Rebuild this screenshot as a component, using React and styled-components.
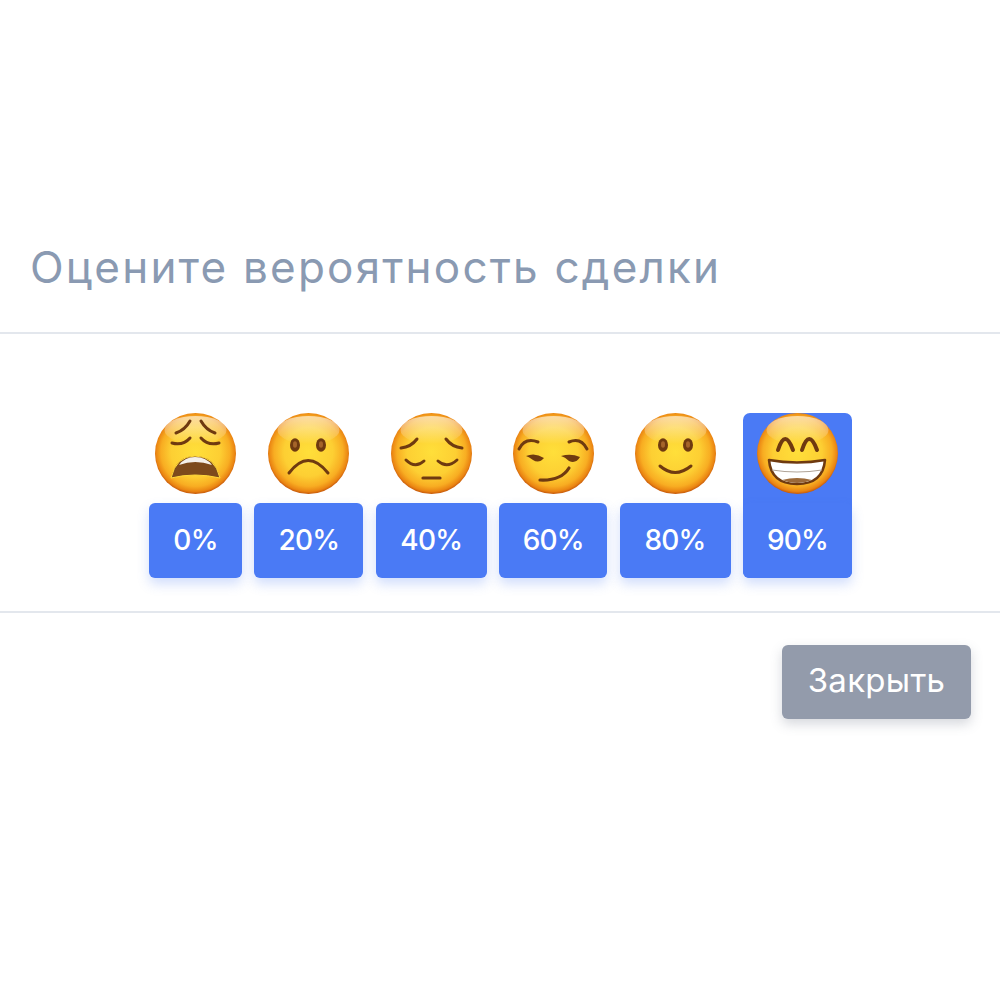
import React from "react";
import styled, { createGlobalStyle } from "styled-components";

const GlobalStyle = createGlobalStyle`
	body {
		margin: 0;
		background: #ffffff;
		font-family: "Inter", "Open Sans", sans-serif;
	}
`;

const INK = "#6f3a10";

function Line({ d, w = 3 }) {
	return <path d={d} fill="none" stroke={INK} strokeWidth={w} strokeLinecap="round" />;
}

function Eye({ cx, cy }) {
	return (
		<>
			<ellipse cx={cx} cy={cy} rx="5" ry="6.8" fill={INK} />
			<ellipse cx={cx} cy={cy - 0.5} rx="2" ry="3.2" fill="#a5642a" />
		</>
	);
}

function Weary() {
	return (
		<>
			<Line d="M21 20 Q30 17 35 8" />
			<Line d="M46 8 Q51 17 60 20" />
			<Line d="M17 30 Q28 33 35 25" />
			<Line d="M46 25 Q53 33 64 30" />
			<path d="M16 65 Q21 43 40 43 Q60 43 65 65 Q40 59 16 65Z" fill="#7d4a1c" stroke="#ffd93b" strokeWidth="1" />
			<path d="M24 52 Q30 44 40 44 Q51 44 57 52 Q40 46 24 52Z" fill="#f4f0ea" />
		</>
	);
}

function Frown() {
	return (
		<>
			<Eye cx={27} cy={32} />
			<Eye cx={53} cy={32} />
			<Line d="M21 60 Q40 35 60 60" />
		</>
	);
}

function Pensive() {
	return (
		<>
			<Line d="M10 35 Q20 34 26 26" />
			<Line d="M55 26 Q61 34 71 35" />
			<Line d="M15 47 Q24 56 33 48" />
			<Line d="M47 48 Q56 56 66 47" />
			<Line d="M32 65 H49" w={3.2} />
		</>
	);
}

function Smirk() {
	return (
		<>
			<Line d="M6 36 Q12 24 25 29" />
			<Line d="M56 29 Q68 24 74 36" />
			<path d="M13 43 Q22 39 31 45 Q26 51 20 47 Q16 44 13 43Z" fill={INK} />
			<path d="M48 43 Q58 40 67 44 Q63 51 56 48 Q52 44 48 43Z" fill={INK} />
			<Line d="M27 67 Q48 68 56 55" w={3.2} />
		</>
	);
}

function Smile() {
	return (
		<>
			<Eye cx={28} cy={32} />
			<Eye cx={53} cy={32} />
			<Line d="M25 53 Q40 66 56 53" />
		</>
	);
}

function Grin() {
	return (
		<>
			<Line d="M21 37 Q28 15 36 37" w={4} />
			<Line d="M45 37 Q52 15 60 37" w={4} />
			<path d="M12 47 Q40 52 68 47 Q66 71 40 71 Q14 71 12 47Z" fill="#ffffff" stroke={INK} strokeWidth="2.6" strokeLinejoin="round" />
			<path d="M15 57 Q40 61 65 57" fill="none" stroke="#b0a498" strokeWidth="1.2" />
			<path d="M25 67 Q40 63 55 67 Q48 70 40 70 Q32 70 25 67Z" fill="#9c6a3a" />
		</>
	);
}

function Face({ id, children }) {
	return (
		<FaceSvg viewBox="0 0 81 81">
			<defs>
				<radialGradient id={id} cx="50%" cy="48%" r="52%">
					<stop offset="0%" stopColor="#ffdf3a" />
					<stop offset="58%" stopColor="#fdcf33" />
					<stop offset="82%" stopColor="#f8ad22" />
					<stop offset="94%" stopColor="#ea8412" />
					<stop offset="100%" stopColor="#c4570a" />
				</radialGradient>
				<linearGradient id={id + "-shine"} x1="0" y1="0" x2="0" y2="1">
					<stop offset="0%" stopColor="#ffffff" stopOpacity="0.6" />
					<stop offset="100%" stopColor="#ffffff" stopOpacity="0" />
				</linearGradient>
			</defs>
			<circle cx="40.5" cy="40.5" r="40.5" fill={`url(#${id})`} />
			<ellipse cx="40.5" cy="17" rx="31" ry="14" fill={`url(#${id}-shine)`} />
			{children}
		</FaceSvg>
	);
}

const options = [
	{ label: "0%", width: 93, Mouth: Weary },
	{ label: "20%", width: 109, Mouth: Frown },
	{ label: "40%", width: 111, Mouth: Pensive },
	{ label: "60%", width: 108, Mouth: Smirk },
	{ label: "80%", width: 111, Mouth: Smile },
	{ label: "90%", width: 109, Mouth: Grin, active: true },
];

export default function App() {
	return (
		<>
			<GlobalStyle />
			<Modal>
				<Header>
					<Title>Оцените вероятность сделки</Title>
				</Header>
				<Body>
					{options.map(({ label, width, Mouth, active }) => (
						<Option key={label} $width={width} $active={active}>
							<Face id={"face-" + parseInt(label)}>
								<Mouth />
							</Face>
							<Label>{label}</Label>
						</Option>
					))}
				</Body>
				<Footer>
					<CloseButton>Закрыть</CloseButton>
				</Footer>
			</Modal>
		</>
	);
}

const Modal = styled.div`
	width: 1000px;
	height: 1000px;
	background: #ffffff;
`;

const Header = styled.div`
	display: flex;
	align-items: flex-end;
	height: 334px;
	padding: 0 30px;
	box-sizing: border-box;
	border-bottom: 2px solid #e3e7ed;
`;

const Title = styled.h2`
	margin: 0 0 36px;
	font-size: 44px;
	line-height: 58px;
	font-weight: 400;
	letter-spacing: 2.2px;
	color: #8a9ab2;
`;

const Body = styled.div`
	display: flex;
	justify-content: center;
	gap: 12.4px;
	padding: 79px 0 33px 1px;
	border-bottom: 2px solid #e3e7ed;
`;

const Option = styled.div`
	width: ${(props) => props.$width}px;
	border-radius: 7px;
	background: ${(props) => (props.$active ? "#4a7af5" : "transparent")};
	display: flex;
	flex-direction: column;
	align-items: center;
	gap: 9px;
`;

const FaceSvg = styled.svg`
	width: 81px;
	height: 81px;
	display: block;
	filter: blur(0.4px);
`;

const Label = styled.div`
	align-self: stretch;
	height: 75px;
	display: flex;
	align-items: center;
	justify-content: center;
	border-radius: 6px;
	background: #4a7af5;
	box-shadow: 0 6px 12px rgba(74, 122, 245, 0.25);
	color: #ffffff;
	font-size: 28px;
	font-weight: 500;
	letter-spacing: -0.8px;
	padding-bottom: 2px;
	box-sizing: border-box;
`;

const Footer = styled.div`
	display: flex;
	justify-content: flex-end;
	padding: 32px 29px;
`;

const CloseButton = styled.button`
	width: 189px;
	height: 74px;
	padding: 0 0 5px;
	border: none;
	border-radius: 6px;
	background: #939bab;
	box-shadow: 0 5px 12px rgba(90, 100, 120, 0.25);
	color: #ffffff;
	font-family: inherit;
	font-size: 33px;
	letter-spacing: 0.3px;
`;
